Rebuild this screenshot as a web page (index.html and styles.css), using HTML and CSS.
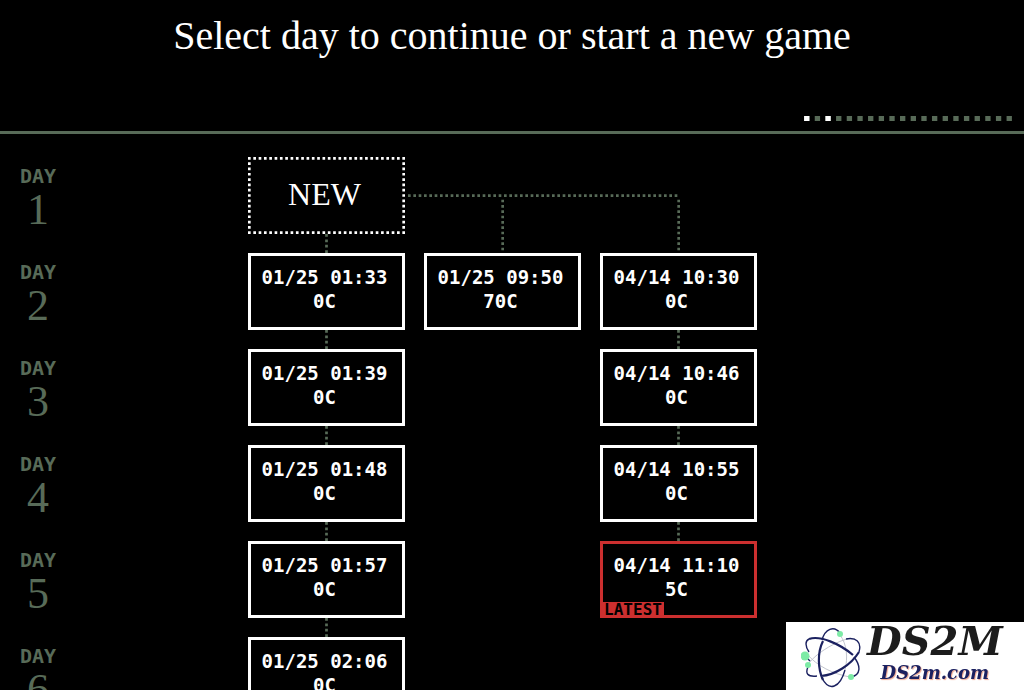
FILE: index.html
```
<!DOCTYPE html>
<html lang="en">
<head>
	<meta charset="utf-8">
	<title>Select day</title>
	<meta name="viewport" content="width=device-width, initial-scale=1">
	<link rel="stylesheet" href="styles.css">
</head>
<body>
<header class="top">
	<h1>Select day to continue or start a new game</h1>
	<svg class="tokens" viewBox="0 0 39 1" aria-hidden="true">
		<path class="dim" d="M0 .5H39"/>
		<path class="lit" d="M0 .5H1M4 .5H5"/>
	</svg>
</header>

<main class="tree">
	<div class="day">DAY <span>1</span></div>
	<button class="slot new">
		<svg class="frame" viewBox="0 0 59 29" preserveAspectRatio="none" aria-hidden="true">
			<path d="M0 .5H59M0 28.5H59M.5 0V29M58.5 0V29"/>
		</svg>
		NEW
	</button>
	<svg class="branch" viewBox="0 0 102 36" aria-hidden="true">
		<path d="M0 14.5H102M35.5 16V36M101.5 16V36"/>
	</svg>

	<div class="day">DAY <span>2</span></div>
	<button class="slot child">01/25 01:33<br>0C<svg class="link" viewBox="0 0 1 7" aria-hidden="true"><path d="M.5 0V7"/></svg></button>
	<button class="slot">01/25 09:50<br>70C</button>
	<button class="slot">04/14 10:30<br>0C</button>

	<div class="day">DAY <span>3</span></div>
	<button class="slot child">01/25 01:39<br>0C<svg class="link" viewBox="0 0 1 7" aria-hidden="true"><path d="M.5 0V7"/></svg></button>
	<button class="slot child third">04/14 10:46<br>0C<svg class="link" viewBox="0 0 1 7" aria-hidden="true"><path d="M.5 0V7"/></svg></button>

	<div class="day">DAY <span>4</span></div>
	<button class="slot child">01/25 01:48<br>0C<svg class="link" viewBox="0 0 1 7" aria-hidden="true"><path d="M.5 0V7"/></svg></button>
	<button class="slot child third">04/14 10:55<br>0C<svg class="link" viewBox="0 0 1 7" aria-hidden="true"><path d="M.5 0V7"/></svg></button>

	<div class="day">DAY <span>5</span></div>
	<button class="slot child">01/25 01:57<br>0C<svg class="link" viewBox="0 0 1 7" aria-hidden="true"><path d="M.5 0V7"/></svg></button>
	<button class="slot child third latest">04/14 11:10<br>5C<svg class="link" viewBox="0 0 1 7" aria-hidden="true"><path d="M.5 0V7"/></svg><span class="tag">LATEST</span></button>

	<div class="day">DAY <span>6</span></div>
	<button class="slot child">01/25 02:06<br>0C<svg class="link" viewBox="0 0 1 7" aria-hidden="true"><path d="M.5 0V7"/></svg></button>
</main>

<aside class="mark">
	<svg class="atom" viewBox="0 0 62 64" aria-hidden="true">
		<path class="thin" d="M8 39C16 29 30 21 40 17Q48 13 54 15M6 30C16 42 32 50 49 53M39 11C46 20 47 34 44 46"/>
		<path class="orbit" d="M39 9C33 1 24 5 21 16"/>
		<path class="orbit" d="M4 32L9 37M8 28C4 22 4 17 8 15M53 33C60 42 60 51 50 53M8 41C3 50 7 53 16 52M45 15C55 13 61 18 58 28M21 54C28 68 39 64 44 46"/>
		<path class="orbit bold" d="M8 15C19 11 39 20 52 31M58 28C50 41 34 51 20 52M22 17C16 29 17 45 22 56"/>
		<circle cx="39" cy="10" r="3"/>
		<circle cx="4" cy="32" r="4.5"/>
		<circle cx="7" cy="41" r="3"/>
		<circle cx="50" cy="53" r="3"/>
	</svg>
	<div class="names">
		<strong>DS2M</strong>
		<span>DS2m.com</span>
	</div>
</aside>
</body>
</html>
```

FILE: styles.css
```
* {
	box-sizing: border-box;
}

body {
	margin: 0;
	height: 100vh;
	overflow: hidden;
	background: #000;
	color: #fff;
	font-family: "DejaVu Sans Mono", monospace;
}

svg {
	display: block;
	fill: none;
}

/* header */
.top {
	display: flex;
	flex-direction: column;
	justify-content: space-between;
	height: 134px;
	padding: 12px 12px 10px;
	border-bottom: 3px solid #586b58;
}

h1 {
	margin: 0;
	font: 40px/48px "Liberation Serif", serif;
	text-align: center;
	white-space: nowrap;
}

.tokens {
	align-self: flex-end;
	width: 208px;
}

.tokens path {
	stroke-width: 1;
}

.dim {
	stroke: #586b58;
	stroke-dasharray: 1 1;
}

.lit {
	stroke: #fff;
}

/* save tree */
.tree {
	display: grid;
	grid-template-columns: 229px repeat(3, 157px);
	grid-auto-rows: 77px;
	gap: 19px;
	padding-top: 23px;
}

.day {
	grid-column: 1;
	width: 76px;
	padding-top: 7px;
	color: #586b58;
	font-size: 20px;
	font-weight: bold;
	line-height: 24px;
	text-align: center;
}

.day span {
	display: block;
	font: 44px/44px "Liberation Serif", serif;
}

.slot {
	position: relative;
	padding: 9px 4px 14px 0;
	border: 3px solid #fff;
	background: #000;
	color: inherit;
	font: bold 19px/24px "DejaVu Sans Mono", monospace;
}

.third {
	grid-column: 4;
}

.new {
	padding: 0 4px 4px 0;
	border-color: transparent;
	font: 32px/40px "Liberation Serif", serif;
}

.frame {
	position: absolute;
	top: -3px;
	left: -3px;
	width: 157px;
	height: 77px;
	stroke: #fff;
	stroke-dasharray: 1 1;
}

.branch {
	grid-column: 3 / 5;
	width: 272px;
	height: 96px;
	margin: 0 0 -19px -16px;
	stroke: #586b58;
	stroke-dasharray: 1 1;
}

.link {
	position: absolute;
	bottom: 100%;
	left: 50%;
	width: 3px;
	height: 19px;
	margin: 0 0 3px -2px;
	stroke: #586b58;
	stroke-dasharray: 1 1;
}

.latest {
	border-color: #cc2f2f;
}

.tag {
	position: absolute;
	bottom: -2px;
	left: -1px;
	width: 62px;
	background: #cc2f2f;
	color: #000;
	font-size: 16px;
	line-height: 15px;
}

/* site mark */
.mark {
	position: fixed;
	right: 0;
	bottom: 0;
	display: flex;
	align-items: center;
	gap: 4px;
	width: 238px;
	height: 68px;
	padding-left: 15px;
	background: #fff;
}

.atom {
	width: 62px;
	height: 64px;
}

.orbit {
	stroke: #1b2160;
	stroke-width: 1.4;
}

.bold {
	stroke-width: 2.2;
}

.thin {
	stroke: #c2c5ce;
	stroke-width: 1;
}

.atom circle {
	fill: #7deba5;
}

.names {
	display: flex;
	flex-direction: column;
	align-items: center;
	color: #1c1c1c;
	font-family: "DejaVu Serif", serif;
	font-style: italic;
	font-weight: bold;
}

.names strong {
	font-size: 40px;
	line-height: 34px;
}

.names span {
	color: #1b2160;
	font-size: 18px;
	line-height: 30px;
	text-shadow: 1px 1px 1px #f0a890;
}
```
